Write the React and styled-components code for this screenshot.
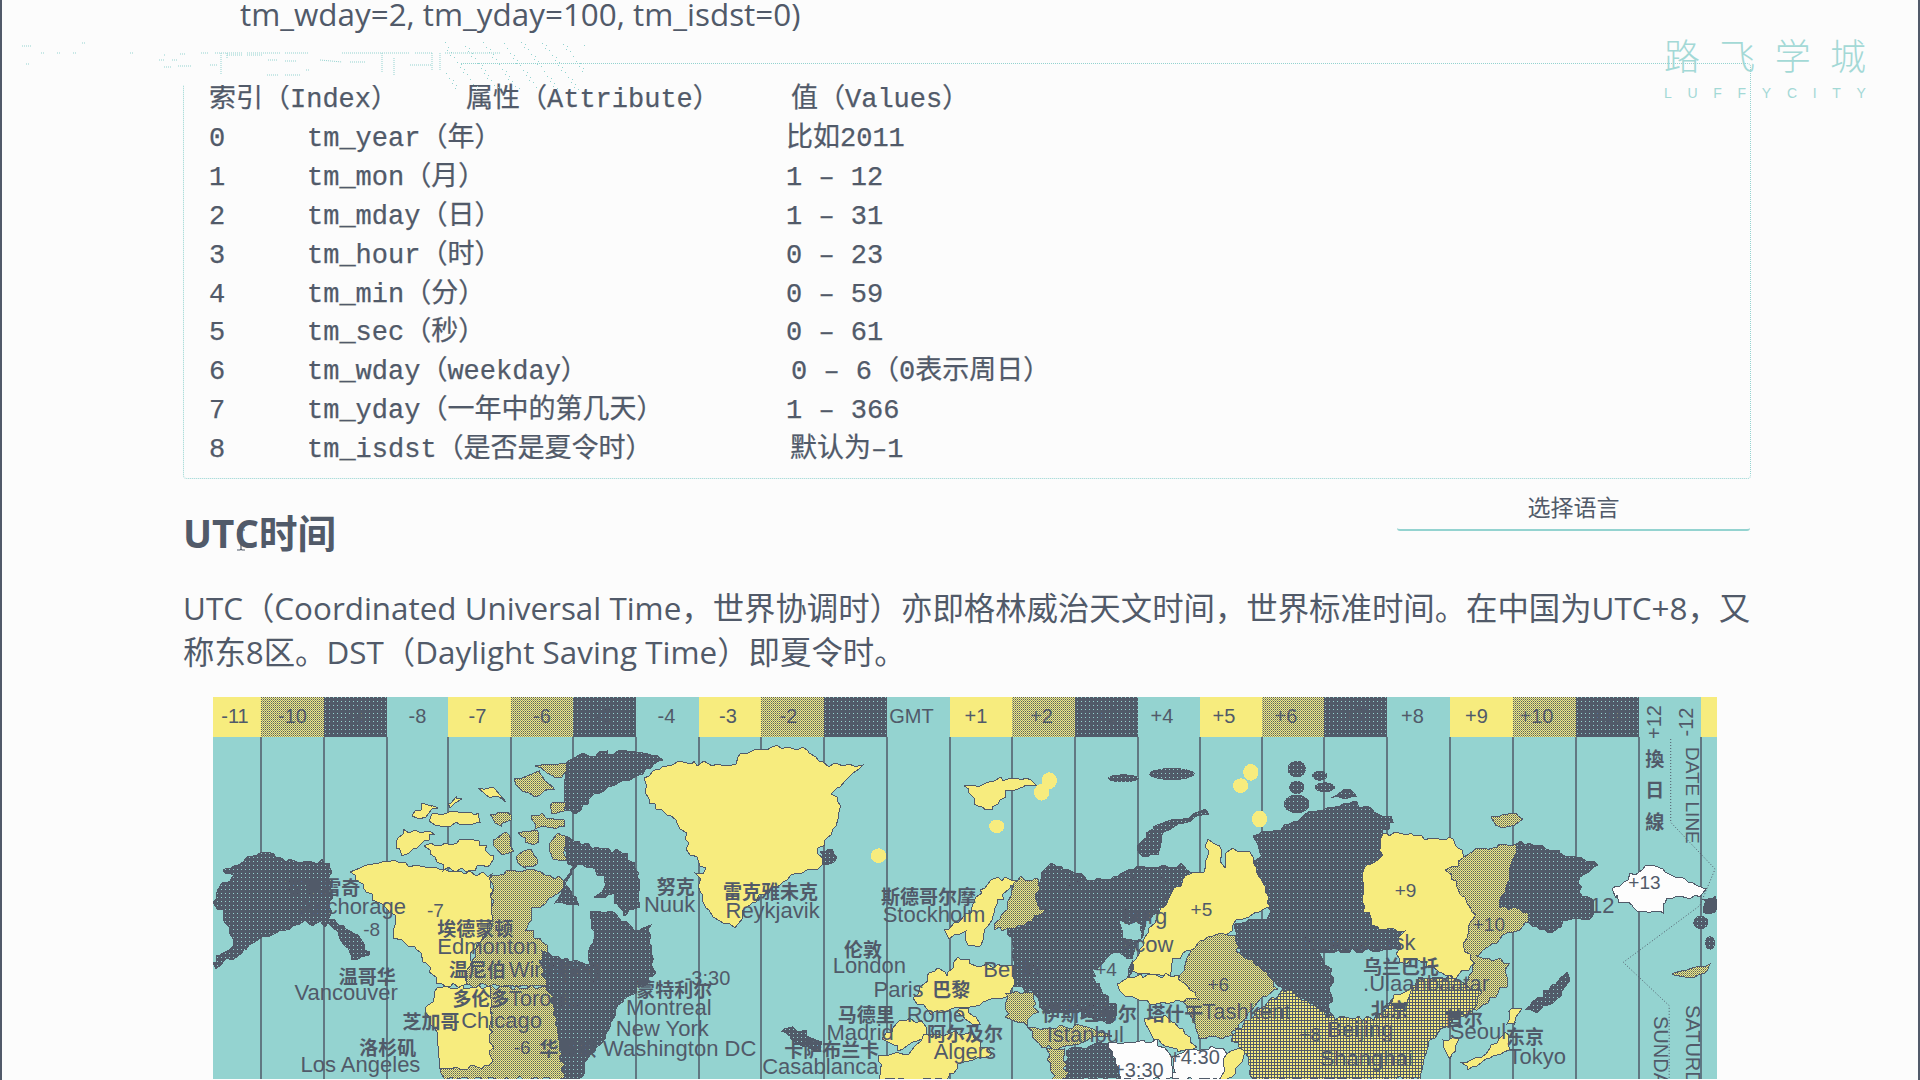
import styled, { createGlobalStyle } from 'styled-components';

const INK = '#515a69';
const TEAL = '#94d3d0';
const YELLOW = '#f7ec7e';
const PAPER = '#fcfcfc';

const GlobalStyle = createGlobalStyle`
    html, body {
        margin: 0;
        padding: 0;
        background: ${PAPER};
    }
`

const Page = styled.div`
    position: relative;
    box-sizing: border-box;
    width: 1920px;
    height: 1080px;
    overflow: hidden;
    padding: 0 167px 0 181px;
    background: ${PAPER};
    border-left: 2px solid ${INK};
    border-right: 2px solid ${INK};
    color: ${INK};
    font-family: "Open Sans", "Noto Sans CJK SC", sans-serif;
`

const TopLine = styled.div`
    height: 28px;
    padding-left: 57px;
    font-size: 31.4px;
    line-height: 28px;
    white-space: pre;
`

const CodeBox = styled.div`
    box-sizing: border-box;
    height: 416px;
    margin-top: 35px;
    padding: 17px 25px 0;
    border: 1px dotted ${TEAL};
    border-radius: 4px;
    font-family: "Liberation Mono", "Noto Sans CJK SC", monospace;
    font-size: 27px;
    -webkit-text-stroke: 0.25px ${INK};
`

const CodeHead = styled.div`
    display: grid;
    grid-template-columns: 257px 325px 1fr;
    height: 39px;
    line-height: 39px;
    white-space: pre;
`

const CodeRow = styled.div`
    display: grid;
    grid-template-columns: 98px 479px 1fr;
    height: 38.9px;
    line-height: 38.9px;
    white-space: pre;
`

const CodeValue = styled.span`
    padding-left: ${p => p.$nudge || 0}px;
`

const Heading = styled.h2`
    margin: 30px 0 0;
    height: 48px;
    font-size: 38.5px;
    font-weight: 700;
    line-height: 48px;
`

const Para = styled.p`
    margin: 29px 0 0;
    font-size: 31.4px;
    line-height: 44px;
    white-space: pre;
`

const MapFrame = styled.div`
    margin: 23px 0 0 30px;
    width: 1504px;
    height: 382px;
`

const LangSelect = styled.div`
    position: absolute;
    left: 1395px;
    top: 490px;
    box-sizing: border-box;
    width: 353px;
    height: 41px;
    border-bottom: 2px solid ${TEAL};
    border-radius: 0 0 3px 3px;
    text-align: center;
    font-size: 23px;
    line-height: 34px;
`

const Logo = styled.div`
    position: absolute;
    left: 1662px;
    top: 35px;
    width: 202px;
    color: ${TEAL};
    opacity: 0.85;
`

const LogoCn = styled.div`
    display: flex;
    justify-content: space-between;
    font-size: 36px;
    font-weight: 300;
    line-height: 44px;
`

const LogoEn = styled.div`
    display: flex;
    justify-content: space-between;
    margin-top: 6px;
    font-family: "Liberation Sans", sans-serif;
    font-size: 14px;
    line-height: 16px;
`

const GhostLayer = styled.svg`
    position: absolute;
    left: 18px;
    top: 40px;
`

const Cursor = styled.svg`
    position: absolute;
    left: 232px;
    top: 529px;
`

const code = [
    ['0', 'tm_year（年）', '比如2011', 0],
    ['1', 'tm_mon（月）', '1 – 12', 0],
    ['2', 'tm_mday（日）', '1 – 31', 0],
    ['3', 'tm_hour（时）', '0 – 23', 0],
    ['4', 'tm_min（分）', '0 – 59', 0],
    ['5', 'tm_sec（秒）', '0 – 61', 0],
    ['6', 'tm_wday（weekday）', '0 – 6（0表示周日）', 5],
    ['7', 'tm_yday（一年中的第几天）', '1 – 366', 0],
    ['8', 'tm_isdst（是否是夏令时）', '默认为–1', 4],
]

// map frames: shapes were traced from crops, each with its own scale
const frames = {
    a: { tx: -13, ty: -8, sx: 1 / 1.96, sy: 1 / 3 },
    b: { tx: 747, ty: -8, sx: 1 / 1.96, sy: 1 / 3 },
    c: { tx: 667, ty: 182, sx: 1 / 3, sy: 1 / 3 },
}

const edges = [213, 261, 324, 387, 448, 511, 573, 636, 699, 761, 824, 887, 950, 1012, 1075, 1138, 1200, 1262, 1324, 1387, 1450, 1513, 1576, 1639, 1701, 1717]
const zoneLabels = ['-11', '-10', '-9', '-8', '-7', '-6', '-5', '-4', '-3', '-2', '-1', 'GMT', '+1', '+2', '+3', '+4', '+5', '+6', '+7', '+8', '+9', '+10', '+11', '', '']
const labelNudge = [-2, 0, 0, 0, -2, 0, 0, -1, -2, -4, 0, -7, -5, -2, 0, -7, -7, -7, 0, -6, -5, -8, 0, 0, 0]
const zoneFills = ['y', 'd', 'k', 't']

const fills = {
    y: YELLOW,
    d: 'url(#dither)',
    k: 'url(#darkland)',
    n: INK,
    c: 'url(#china)',
    w: '#fdfdfd',
    t: TEAL,
}

const lands = [
    // north america
    ['a', 'y', '870,265 930,220 1010,225 1040,230 1060,195 1130,175 1190,180 1222,225 1300,230 1270,265 1240,310 1255,350 1240,420 1210,490 1225,520 1180,550 1130,590 1075,650 1050,710 1010,690 985,640 975,560 990,540 960,490 950,430 930,390 880,340'],
    ['a', 'k', '30,610 70,560 45,550 120,490 170,515 255,520 255,690 310,740 335,800 300,810 260,710 200,700 110,760 30,840 30,800 70,770 50,700 30,640'],
    ['a', 'y', '295,545 365,510 420,530 570,560 572,700 530,800 520,890 470,890 420,770 380,745 390,690 340,630'],
    ['a', 'y', '465,895 570,895 570,1130 470,1140 465,1030 440,970'],
    ['a', 'd', '572,560 640,540 715,570 700,620 650,660 640,720 680,770 680,890 520,890 535,800 572,700'],
    ['a', 'd', '570,895 690,895 700,1000 715,1170 480,1170 470,1140 570,1130'],
    ['a', 'k', '670,790 760,830 770,730 765,670 800,660 850,720 880,710 885,790 890,860 850,910 820,950 790,1050 760,1110 750,1170 715,1170 700,1020 690,920 670,860'],
    ['a', 'k', '715,440 760,470 830,490 860,550 860,650 830,680 810,620 770,630 800,590 780,550 740,520 720,590 745,650 700,640 710,600 730,530 715,500'],
    ['a', 'k', '735,200 850,185 905,210 860,260 770,320 740,370 715,370 715,220'],
    ['a', 'y', '415,385 440,350 465,350 440,380'],
    ['a', 'y', '485,345 505,322 510,335 495,350'],
    ['a', 'y', '545,300 570,295 595,330 570,325'],
    ['a', 'y', '450,380 510,365 545,380 545,405 500,405 480,420 450,395'],
    ['a', 'y', '380,470 400,425 460,430 430,470 400,495'],
    ['a', 'y', '440,470 510,460 545,450 580,515 540,545 480,540'],
    ['a', 'd', '615,270 660,245 695,300 660,325 625,300'],
    ['a', 'd', '570,375 610,370 610,400 585,405'],
    ['a', 'd', '660,230 715,220 715,260 690,260'],
    ['a', 'd', '570,460 600,430 615,480 590,490'],
    ['a', 'd', '625,430 660,420 665,460 640,465'],
    ['a', 'd', '620,490 650,480 660,530 625,530'],
    ['a', 'd', '680,470 700,435 715,440 715,510 690,510'],
    ['a', 'd', '650,375 715,395 715,415 660,415'],
    ['a', 'd', '685,345 715,340 715,370 690,370'],
    ['a', 'k', '1215,490 1240,480 1248,510 1225,525'],
    ['a', 'k', '1140,1020 1165,1015 1215,1060 1210,1085 1170,1060'],
    // asia
    ['b', 'k', '575,445 630,420 680,375 770,335 850,395 825,435 825,500 790,540 790,650 815,720 860,715 870,740 860,780 700,790 730,850 725,980 640,900 580,860 540,770 540,700 610,680 585,590 560,520 590,500'],
    ['b', 'k', '150,600 170,520 240,560 260,590 300,560 340,535 440,530 450,550 400,640 150,640'],
    ['b', 'k', '345,480 380,410 480,360 485,375 400,420 385,500 360,505'],
    ['b', 'k', '730,330 755,300 780,320'],
    ['b', 'y', '825,435 885,435 920,455 960,440 1000,520 1010,680 985,770 1010,820 970,870 900,815 860,820 860,740 870,730 850,715 815,720 790,650 790,540 825,500'],
    ['b', 'd', '955,545 1000,490 1090,460 1060,650 1115,670 1110,700 1010,800 1075,820 1070,890 1010,970 985,890 1010,820 985,770 1010,680'],
    ['b', 'k', '1090,460 1140,470 1180,495 1230,510 1250,530 1215,560 1215,610 1245,640 1240,690 1190,690 1165,730 1110,700 1115,670 1060,650'],
    ['b', 'w', '1275,600 1310,570 1350,525 1430,580 1465,600 1450,625 1385,625 1380,665 1340,670 1280,620'],
    ['b', 'k', '1110,960 1190,850 1195,880 1170,930 1130,970'],
    ['b', 'y', '330,850 400,640 450,550 480,550 485,455 510,470 515,530 530,480 570,490 585,560 610,650 545,690 530,730 450,780 420,810 410,860'],
    ['b', 'd', '430,870 450,780 500,735 540,740 545,790 610,860 620,900 590,930 530,1040 470,1050 430,900'],
    ['b', 'c', '530,1040 610,930 640,900 730,985 810,990 900,870 960,860 1020,910 1000,970 950,1010 920,1060 900,1170 570,1170 565,1110'],
    ['b', 'y', '835,950 860,915 890,900 870,945'],
    ['b', 'y', '950,1060 975,1040 970,1090 960,1110'],
    ['b', 'y', '985,1120 1030,1090 1070,1030 1078,1090 1050,1100 1000,1140'],
    ['b', 'y', '1075,960 1098,955 1090,1000 1075,1000'],
    ['b', 'y', '10,290 60,285 80,270 130,270 150,285 100,300 60,365 35,350'],
    ['b', 'n', '1455,630 1483,625 1483,670 1460,670'],
    ['b', 'd', '1395,850 1430,835 1470,830 1465,850 1410,865'],
    ['b', 'd', '1040,385 1075,372 1105,390 1070,412 1045,410'],
    // europe
    ['c', 'k', '460,50 480,30 640,0 860,0 860,70 790,140 760,240 750,290 700,280 640,290 660,330 710,390 700,440 600,400 490,400 470,340 400,320 400,200 380,150 440,130 500,90 470,80'],
    ['c', 't', '720,130 790,135 780,180 730,180'],
    ['c', 't', '640,280 700,220 750,240 740,290 680,320'],
    ['c', 'y', '195,150 250,120 330,0 410,0 340,90 300,210 265,200 250,150 205,175'],
    ['c', 'd', '410,0 480,0 470,80 500,90 440,130 400,150 340,150 380,90'],
    ['c', 'y', '200,290 230,230 290,260 400,260 400,330 390,350 300,370 200,400 150,400 100,360 170,260'],
    ['c', 'y', '250,380 300,430 280,440 230,400'],
    ['c', 'y', '60,420 130,430 150,470 60,510 10,480'],
    ['c', 'y', '0,530 90,520 130,470 270,460 330,520 240,560 200,600 0,600'],
    ['c', 'd', '380,340 460,340 470,400 440,440 380,420'],
    ['c', 'd', '450,450 620,440 690,470 590,490 540,510 470,500'],
    ['c', 'y', '710,320 780,290 890,290 960,360 880,370 830,380 780,360 730,350'],
    ['c', 'y', '790,420 860,410 950,500 900,520 820,480'],
    ['c', 'w', '680,495 830,485 880,530 870,600 720,600'],
    ['c', 'w', '880,530 1000,500 1040,520 1020,600 880,600'],
    ['c', 'y', '1020,600 1040,520 1090,510 1080,560 1060,600'],
    ['c', 'k', '560,510 680,490 720,600 560,600'],
    ['c', 'd', '500,510 550,510 560,600 520,600'],
]

const blobs = [
    ['a', 'y', 1330, 500, 15, 22],
    ['b', 'y', 175, 275, 15, 25],
    ['b', 'y', 160, 310, 15, 25],
    ['b', 'y', 72, 412, 15, 20],
    ['b', 'y', 570, 250, 15, 25],
    ['b', 'y', 550, 290, 15, 22],
    ['b', 'y', 587, 390, 15, 25],
    ['b', 'k', 320, 268, 30, 12],
    ['b', 'k', 415, 255, 45, 18],
    ['b', 'k', 660, 240, 18, 25],
    ['b', 'k', 705, 260, 15, 15],
    ['b', 'k', 660, 295, 15, 20],
    ['b', 'k', 715, 295, 20, 15],
    ['b', 'k', 660, 345, 25, 28],
    ['b', 'k', 1452, 700, 15, 20],
    ['b', 'k', 1470, 762, 10, 20],
]

const places = [
    ['a', 165, 618, '安克雷奇', 19],
    ['a', 195, 675, 'Anchorage', 22],
    ['a', 320, 740, '-8', 19],
    ['a', 445, 685, '-7', 19],
    ['a', 465, 740, '埃德蒙顿', 19],
    ['a', 465, 795, 'Edmonton', 22],
    ['a', 488, 865, '温尼伯', 19],
    ['a', 605, 865, 'Winnipeg', 22],
    ['a', 272, 885, '温哥华', 19],
    ['a', 185, 932, 'Vancouver', 22],
    ['a', 495, 950, '多伦多', 19],
    ['a', 605, 950, 'Toronto', 22],
    ['a', 397, 1020, '芝加哥', 19],
    ['a', 512, 1018, 'Chicago', 22],
    ['a', 312, 1097, '洛杉矶', 19],
    ['a', 197, 1150, 'Los Angeles', 22],
    ['a', 615, 1095, '-6', 19],
    ['a', 665, 1100, '华盛顿', 19],
    ['a', 790, 1100, 'Washington DC', 22],
    ['a', 855, 925, '蒙特利尔', 19],
    ['a', 835, 978, 'Montreal', 22],
    ['a', 815, 1040, 'New York', 22],
    ['a', 950, 888, '-3:30', 20],
    ['a', 895, 615, '努克', 19],
    ['a', 870, 668, 'Nuuk', 22],
    ['a', 1025, 630, '雷克雅未克', 19],
    ['a', 1030, 688, 'Reykjavik', 22],
    ['a', 1335, 645, '斯德哥尔摩', 19],
    ['a', 1338, 698, 'Stockholm', 22],
    ['a', 1262, 805, '伦敦', 19],
    ['a', 1240, 852, 'London', 22],
    ['a', 1320, 925, 'Paris', 22],
    ['a', 1435, 925, '巴黎', 19],
    ['a', 1250, 1000, '马德里', 19],
    ['a', 1385, 1000, 'Rome', 22],
    ['a', 1228, 1053, 'Madrid', 22],
    ['a', 1425, 1055, '阿尔及尔', 19],
    ['a', 1438, 1110, 'Algers', 22],
    ['a', 1145, 1105, '卡萨布兰卡', 19],
    ['a', 1102, 1155, 'Casablanca', 22],
    ['b', 452, 680, '+5', 19],
    ['b', 852, 625, '+9', 19],
    ['b', 1005, 725, '+10', 19],
    ['b', 1310, 600, '+13', 19],
    ['b', 1235, 672, '12', 22],
    ['b', 265, 860, '+4', 19],
    ['b', 485, 905, '+6', 19],
    ['b', 320, 705, 'burg', 22],
    ['b', 320, 790, 'scow', 22],
    ['b', 670, 782, 'Novosibirsk', 22],
    ['b', 790, 855, '乌兰巴托', 19],
    ['b', 790, 905, '.Ulaanbaatar', 22],
    ['b', 805, 985, '北京', 19],
    ['b', 720, 1045, 'Beijing', 22],
    ['b', 665, 1055, '+8', 19],
    ['b', 705, 1130, 'Shanghai', 22],
    ['b', 950, 1010, '首尔', 19],
    ['b', 960, 1050, 'Seoul', 22],
    ['b', 1070, 1065, '东京', 19],
    ['b', 1075, 1125, 'Tokyo', 22],
    ['b', 160, 995, '伊斯坦布尔', 19],
    ['b', 365, 995, '塔什干', 19],
    ['b', 475, 990, 'Tashkent', 22],
    ['b', 170, 1060, 'Istanbul', 22],
    ['b', 410, 1125, '+4:30', 20],
    ['b', 300, 1165, '+3:30', 20],
    ['c', 310, 295, 'Berlin', 22],
]

const toLocal = (f, x, y) => [frames[f].tx + x * frames[f].sx, frames[f].ty + y * frames[f].sy]

const wobble = (x, y) => 1.6 * Math.sin(x * 0.9 + y * 1.7) + 1.1 * Math.sin(x * 2.3 - y * 0.8)

// break straight edges up so the coasts look like the scanned map
const mapPoints = (f, pts) => {
    const corners = pts.split(' ').map(p => {
        const [x, y] = p.split(',').map(Number)
        return toLocal(f, x, y)
    })
    const out = []
    corners.forEach((a, i) => {
        const b = corners[(i + 1) % corners.length]
        const steps = Math.max(1, Math.round(Math.hypot(b[0] - a[0], b[1] - a[1]) / 5))
        for (let s = 0; s < steps; s++) {
            const x = a[0] + (b[0] - a[0]) * s / steps
            const y = a[1] + (b[1] - a[1]) * s / steps
            out.push(`${Math.round(x + wobble(x, y))},${Math.round(y + wobble(y, x))}`)
        }
    })
    return out.join(' ')
}

const dateLine = ['1393,150', '1393,400', '1480,540', '1450,650', '1300,820', '1390,950', '1390,1170']
    .map(p => {
        const [x, y] = p.split(',').map(Number)
        return toLocal('b', x, y).join(',')
    }).join(' ')

const WorldMap = () => {
    const labelFont = '"Liberation Sans", "Noto Sans CJK SC", sans-serif'
    return (
        <svg width="1504" height="382" viewBox="0 0 1504 382" style={{ display: 'block' }}>
            <defs>
                <pattern id="dither" width="2" height="2" patternUnits="userSpaceOnUse">
                    <rect width="2" height="2" fill={YELLOW} />
                    <rect width="1" height="1" fill={INK} />
                    <rect x="1" y="1" width="1" height="1" fill="#8f9a78" />
                </pattern>
                <pattern id="darkland" width="4" height="4" patternUnits="userSpaceOnUse">
                    <rect width="4" height="4" fill={INK} />
                    <rect width="1" height="1" fill={TEAL} />
                </pattern>
                <pattern id="china" width="3" height="3" patternUnits="userSpaceOnUse">
                    <rect width="3" height="3" fill={INK} />
                    <rect width="2" height="2" fill={YELLOW} />
                </pattern>
            </defs>

            <rect width="1504" height="382" fill={TEAL} />

            {zoneLabels.map((label, i) => {
                const x = edges[i] - 213
                const w = edges[i + 1] - edges[i]
                const kind = i === 24 ? 'y' : i === 23 ? 't' : zoneFills[i % 4]
                return (
                    <g key={i}>
                        <rect x={x} y="0" width={w} height="40" fill={fills[kind]} />
                        {i > 0 && i < 25 && <line x1={x} x2={x} y1="40" y2="382" stroke={INK} strokeWidth="1.5" />}
                        <text x={x + w / 2 + labelNudge[i]} y="26" textAnchor="middle" fontFamily={labelFont} fontSize="20" fill={INK}>{label}</text>
                    </g>
                )
            })}
            <text transform="translate(1448,25) rotate(-90)" textAnchor="middle" fontFamily={labelFont} fontSize="20" fill={INK}>+12</text>
            <text transform="translate(1480,25) rotate(-90)" textAnchor="middle" fontFamily={labelFont} fontSize="20" fill={INK}>-12</text>

            {lands.map(([f, fill, pts], i) => (
                <polygon key={i} points={mapPoints(f, pts)} fill={fills[fill]} stroke={fill === 't' ? 'none' : INK} strokeWidth="1" shapeRendering="crispEdges" />
            ))}
            {blobs.map(([f, fill, x, y, rx, ry], i) => {
                const [cx, cy] = toLocal(f, x, y)
                return <ellipse key={i} cx={cx} cy={cy} rx={rx * frames[f].sx} ry={ry * frames[f].sy} fill={fills[fill]} shapeRendering="crispEdges" />
            })}

            <polyline points={dateLine} fill="none" stroke={INK} strokeWidth="1" strokeDasharray="1 2" />

            {places.map(([f, x, y, text, size], i) => {
                const [lx, ly] = toLocal(f, x, y)
                const isCjk = /[\u4e00-\u9fff]/.test(text)
                return <text key={i} x={lx} y={ly} fontFamily={labelFont} fontSize={size} fontWeight={isCjk ? 700 : 400} fill={INK}>{text}</text>
            })}

            {['換', '日', '線'].map((ch, i) => {
                const [lx, ly] = toLocal('b', 1343, 230 + i * 95)
                return <text key={ch} x={lx} y={ly} fontFamily={labelFont} fontSize="19" fontWeight="700" fill={INK}>{ch}</text>
            })}
            <text transform="translate(1473,50) rotate(90)" fontFamily={labelFont} fontSize="19" fill={INK}>DATE LINE</text>
            <text transform="translate(1473,308) rotate(90)" fontFamily={labelFont} fontSize="20" fill={INK}>SATURDAY</text>
            <text transform="translate(1441,319) rotate(90)" fontFamily={labelFont} fontSize="20" fill={INK}>SUNDAY</text>
        </svg>
    )
}

// the half faded site header: only specks of it are left in the picture
const ghostStrokes = [
    [2, 6, 11, 6], [62, 3, 65, 3], [21, 13, 25, 13], [37, 13, 41, 13], [53, 13, 56, 13], [110, 13, 113, 13], [6, 24, 10, 24],
    [139, 20, 145, 20], [152, 20, 158, 20], [144, 15, 146, 15], [160, 14, 165, 14], [181, 13, 188, 13], [195, 13, 222, 13],
    [227, 13, 260, 13], [265, 13, 288, 13], [248, 20, 258, 20], [265, 21, 277, 21], [201, 13, 201, 35], [207, 13, 207, 18],
    [207, 15, 222, 15], [227, 15, 242, 15], [144, 27, 152, 27], [158, 26, 172, 26], [190, 25, 197, 25], [247, 35, 258, 35],
    [265, 35, 280, 35], [286, 30, 290, 30], [300, 20, 322, 22], [322, 13, 390, 13], [330, 22, 345, 22], [362, 13, 362, 33],
    [374, 18, 374, 36], [390, 25, 412, 25], [395, 13, 412, 13], [412, 13, 412, 30], [420, 13, 420, 30], [425, 13, 480, 13],
]

const ghostDots = Array.from({ length: 130 }, (_, i) => [
    (i * 37) % 140 + 425,
    (i * 23) % 54 + 2,
])

const GhostHeader = () => (
    <GhostLayer width="600" height="50" viewBox="0 0 600 50">
        <rect x="0" y="0" width="440" height="45" fill={PAPER} />
        {ghostStrokes.map((s, i) => (
            <line key={i} x1={s[0]} y1={s[1]} x2={s[2]} y2={s[3]} stroke={TEAL} strokeWidth="1" strokeDasharray="1 1" />
        ))}
        {ghostDots.map((d, i) => <rect key={i} x={d[0]} y={d[1]} width="1" height="1" fill={TEAL} />)}
    </GhostLayer>
)

const App = () => {
    return (
        <Page>
            <GlobalStyle />
            <TopLine>tm_wday=2, tm_yday=100, tm_isdst=0)</TopLine>
            <CodeBox>
                <CodeHead>
                    <span>索引（Index）</span>
                    <span>属性（Attribute）</span>
                    <span>值（Values）</span>
                </CodeHead>
                {code.map(([index, name, value, nudge]) => (
                    <CodeRow key={index}>
                        <span>{index}</span>
                        <span>{name}</span>
                        <CodeValue $nudge={nudge}>{value}</CodeValue>
                    </CodeRow>
                ))}
            </CodeBox>
            <Heading>UTC时间</Heading>
            <Para>UTC（Coordinated Universal Time，世界协调时）亦即格林威治天文时间，世界标准时间。在中国为UTC+8，又{'\n'}称东8区。DST（Daylight Saving Time）即夏令时。</Para>
            <MapFrame>
                <WorldMap />
            </MapFrame>

            <GhostHeader />
            <Logo>
                <LogoCn>{['路', '飞', '学', '城'].map(c => <span key={c}>{c}</span>)}</LogoCn>
                <LogoEn>{'LUFFYCITY'.split('').map((c, i) => <span key={i}>{c}</span>)}</LogoEn>
            </Logo>
            <LangSelect>选择语言</LangSelect>
            <Cursor width="14" height="22" viewBox="0 0 14 22">
                <path d="M3 1h3l1 1 1-1h3M7 2v18M3 21h3l1-1 1 1h3" fill="none" stroke={INK} strokeWidth="1.2" />
            </Cursor>
        </Page>
    )
}

export default App
